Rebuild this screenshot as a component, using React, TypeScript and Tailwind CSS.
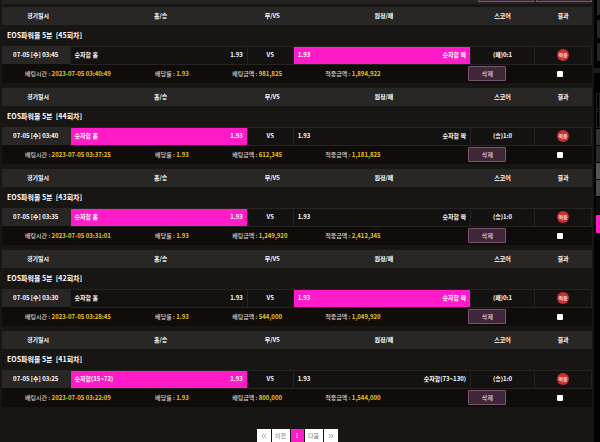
import { clsx } from "clsx"
import { ChevronsLeft, ChevronsRight } from "lucide-react"

type Bet = {
  round: number
  time: string
  home: string
  away: string
  pick: "home" | "away"
  score: string
  placedAt: string
  amount: string
  payout: string
}

const bets: Bet[] = [
  { round: 45, time: "03:45", home: "숫자합 홀", away: "숫자합 짝", pick: "away", score: "(패)0:1", placedAt: "03:40:49", amount: "981,825", payout: "1,894,922" },
  { round: 44, time: "03:40", home: "숫자합 홀", away: "숫자합 짝", pick: "home", score: "(승)1:0", placedAt: "03:37:25", amount: "612,345", payout: "1,181,825" },
  { round: 43, time: "03:35", home: "숫자합 홀", away: "숫자합 짝", pick: "home", score: "(승)1:0", placedAt: "03:31:01", amount: "1,249,920", payout: "2,412,345" },
  { round: 42, time: "03:30", home: "숫자합 홀", away: "숫자합 짝", pick: "away", score: "(패)0:1", placedAt: "03:28:45", amount: "544,000", payout: "1,049,920" },
  { round: 41, time: "03:25", home: "숫자합(15~72)", away: "숫자합(73~130)", pick: "home", score: "(승)1:0", placedAt: "03:22:09", amount: "800,000", payout: "1,544,000" },
]

function Meta({ label, value }: { label: string; value: string }) {
  return (
    <span className="whitespace-nowrap font-medium text-[#d6d3d1]">
      {label} : <b className="text-[#e8c620]">{value}</b>
    </span>
  )
}

function Team({ name, side, picked }: { name: string; side: "home" | "away"; picked: boolean }) {
  return (
    <td className={clsx("border border-[#252422] px-1", picked && "bg-[#ff1bc8]")}>
      <div className="flex justify-between font-bold">
        {side === "home" ? (
          <>
            <span>{name}</span>
            <span>1.93</span>
          </>
        ) : (
          <>
            <span>1.93</span>
            <span>{name}</span>
          </>
        )}
      </div>
    </td>
  )
}

function BetTable({ bet }: { bet: Bet }) {
  return (
    <table className="mb-[5px] w-full table-fixed border-collapse text-center">
      <thead>
        <tr className="h-[18px] bg-[#282726]">
          <th className="w-[68px] pl-1">경기일시</th>
          <th className="pl-1">홈/승</th>
          <th className="w-[46px] pl-1">무/VS</th>
          <th className="pl-1">원정/패</th>
          <th className="w-[64px]">스코어</th>
          <th className="w-[57px]">결과</th>
        </tr>
      </thead>
      <tbody>
        <tr className="h-[21px]">
          <th colSpan={6} className="whitespace-pre pl-[5px] text-left text-[7px]">
            {`EOS파워볼 5분  [${bet.round}회차]`}
          </th>
        </tr>
        <tr className="h-[18px] bg-[#131210] font-bold">
          <td className="bg-[#282726]">07-05 [수] {bet.time}</td>
          <Team name={bet.home} side="home" picked={bet.pick === "home"} />
          <td className="border border-[#252422]">VS</td>
          <Team name={bet.away} side="away" picked={bet.pick === "away"} />
          <td className="border border-[#252422]">{bet.score}</td>
          <td className="border border-[#252422]">
            <span className="mx-auto flex size-3 items-center justify-center whitespace-nowrap rounded-full bg-[#c92f35] pb-px text-[5px] font-medium text-[#ffe4e4]">
              적중
            </span>
          </td>
        </tr>
        <tr className="h-[19px] bg-[#100c09]">
          <td colSpan={6}>
            <div className="grid grid-cols-[130fr_77fr_93fr_143fr_89fr_34fr] items-center pl-[23px] text-left">
              <Meta label="배팅시간" value={`2023-07-05 ${bet.placedAt}`} />
              <Meta label="배당률" value="1.93" />
              <Meta label="배팅금액" value={bet.amount} />
              <Meta label="적중금액" value={bet.payout} />
              <button className="h-[15px] w-[38px] rounded-[1px] border border-[#76566f] bg-[#402639] font-medium text-[#e4d5df]">
                삭제
              </button>
              <input
                type="checkbox"
                aria-label={`${bet.round}회차 선택`}
                className="size-[6px] appearance-none rounded-[1px] bg-white checked:bg-[#ff1bc8]"
              />
            </div>
          </td>
        </tr>
      </tbody>
    </table>
  )
}

const pageButton = "flex h-[13px] items-center justify-center bg-white text-[#777]"

function Pagination() {
  return (
    <nav className="mt-[22px] flex justify-center gap-px text-[6px]">
      <button className={clsx(pageButton, "w-[14px]")} aria-label="처음">
        <ChevronsLeft size={8} strokeWidth={2} />
      </button>
      <button className={clsx(pageButton, "w-[18px]")}>이전</button>
      <button className="h-[13px] w-[13px] bg-[#ff1bc8] text-white" aria-current="page">1</button>
      <button className={clsx(pageButton, "w-[18px]")}>다음</button>
      <button className={clsx(pageButton, "w-[14px]")} aria-label="마지막">
        <ChevronsRight size={8} strokeWidth={2} />
      </button>
    </nav>
  )
}

// Edge of the bet slip panel on the right
function BetSlip() {
  return (
    <aside className="w-[6px] shrink-0 overflow-hidden bg-black">
      <div className="flex flex-col gap-[5px] pl-[3px]">
        <div className="h-[15px] bg-[#252525]" />
        <div className="h-[18px] bg-[#252525]" />
        <div className="h-[18px] bg-[#252525]" />
      </div>
      <div className="mt-[7px] h-[5px] bg-[#1b1a19]" />
      <div className="mt-5 flex flex-col gap-px pl-[2px]">
        <div className="h-[17px] border border-[#242424]" />
        <div className="h-[17px] border border-[#242424]" />
        <div className="h-[16px] bg-[#333]" />
        <div className="h-[16px] bg-[#2a2a2a]" />
        <div className="h-[16px] bg-[#555]" />
        <div className="h-[16px] bg-[#4a4a4a]" />
        <div className="h-[17px] bg-[#0c0c0c]" />
        <div className="h-[18px] rounded-l-[1px] bg-[#ff1bc8]" />
      </div>
    </aside>
  )
}

export default function App() {
  return (
    <div className="flex min-h-screen bg-[#171613] font-['Noto_Sans_CJK_KR',sans-serif] text-[6px] leading-none text-white">
      <main className="min-w-0 flex-1 pl-[2px] pr-[2px]">
        <div className="mb-[3px] flex h-1 justify-end gap-[2px] bg-[#242322]">
          <div className="h-[2px] w-[56px] border border-t-0 border-[#76566f] bg-[#402639]" />
          <div className="h-[2px] w-[56px] border border-t-0 border-[#76566f] bg-[#402639]" />
        </div>
        {bets.map((bet) => (
          <BetTable key={bet.round} bet={bet} />
        ))}
        <Pagination />
      </main>
      <BetSlip />
    </div>
  )
}
